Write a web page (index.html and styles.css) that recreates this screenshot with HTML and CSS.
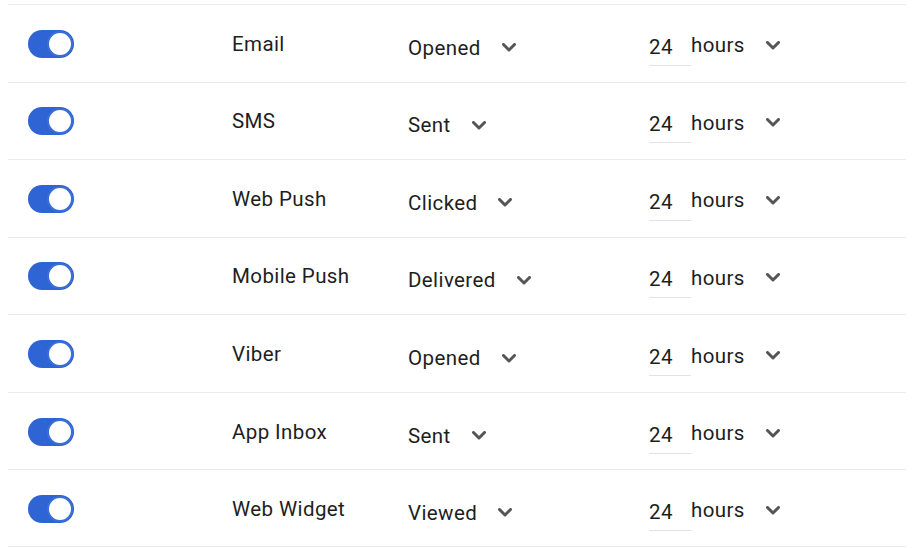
FILE: index.html
```html
<!DOCTYPE html>
<html>
<head>
<meta charset="utf-8">
<link rel="stylesheet" href="styles.css">
</head>
<body>
<div class="list">
  <div class="row">
    <div class="toggle"><span class="knob"></span></div>
    <div class="name">Email</div>
    <div class="status"><span class="status-text">Opened</span><svg class="chev" viewBox="0 0 14 9"><path d="M1.5 1.5 L7 7 L12.5 1.5"/></svg></div>
    <div class="time"><span class="num">24</span><span class="unit">hours</span><svg class="chev" viewBox="0 0 14 9"><path d="M1.5 1.5 L7 7 L12.5 1.5"/></svg></div>
  </div>
  <div class="row">
    <div class="toggle"><span class="knob"></span></div>
    <div class="name">SMS</div>
    <div class="status"><span class="status-text">Sent</span><svg class="chev" viewBox="0 0 14 9"><path d="M1.5 1.5 L7 7 L12.5 1.5"/></svg></div>
    <div class="time"><span class="num">24</span><span class="unit">hours</span><svg class="chev" viewBox="0 0 14 9"><path d="M1.5 1.5 L7 7 L12.5 1.5"/></svg></div>
  </div>
  <div class="row">
    <div class="toggle"><span class="knob"></span></div>
    <div class="name">Web Push</div>
    <div class="status"><span class="status-text">Clicked</span><svg class="chev" viewBox="0 0 14 9"><path d="M1.5 1.5 L7 7 L12.5 1.5"/></svg></div>
    <div class="time"><span class="num">24</span><span class="unit">hours</span><svg class="chev" viewBox="0 0 14 9"><path d="M1.5 1.5 L7 7 L12.5 1.5"/></svg></div>
  </div>
  <div class="row">
    <div class="toggle"><span class="knob"></span></div>
    <div class="name">Mobile Push</div>
    <div class="status"><span class="status-text">Delivered</span><svg class="chev" viewBox="0 0 14 9"><path d="M1.5 1.5 L7 7 L12.5 1.5"/></svg></div>
    <div class="time"><span class="num">24</span><span class="unit">hours</span><svg class="chev" viewBox="0 0 14 9"><path d="M1.5 1.5 L7 7 L12.5 1.5"/></svg></div>
  </div>
  <div class="row">
    <div class="toggle"><span class="knob"></span></div>
    <div class="name">Viber</div>
    <div class="status"><span class="status-text">Opened</span><svg class="chev" viewBox="0 0 14 9"><path d="M1.5 1.5 L7 7 L12.5 1.5"/></svg></div>
    <div class="time"><span class="num">24</span><span class="unit">hours</span><svg class="chev" viewBox="0 0 14 9"><path d="M1.5 1.5 L7 7 L12.5 1.5"/></svg></div>
  </div>
  <div class="row">
    <div class="toggle"><span class="knob"></span></div>
    <div class="name">App Inbox</div>
    <div class="status"><span class="status-text">Sent</span><svg class="chev" viewBox="0 0 14 9"><path d="M1.5 1.5 L7 7 L12.5 1.5"/></svg></div>
    <div class="time"><span class="num">24</span><span class="unit">hours</span><svg class="chev" viewBox="0 0 14 9"><path d="M1.5 1.5 L7 7 L12.5 1.5"/></svg></div>
  </div>
  <div class="row">
    <div class="toggle"><span class="knob"></span></div>
    <div class="name">Web Widget</div>
    <div class="status"><span class="status-text">Viewed</span><svg class="chev" viewBox="0 0 14 9"><path d="M1.5 1.5 L7 7 L12.5 1.5"/></svg></div>
    <div class="time"><span class="num">24</span><span class="unit">hours</span><svg class="chev" viewBox="0 0 14 9"><path d="M1.5 1.5 L7 7 L12.5 1.5"/></svg></div>
  </div>
</div>
</body>
</html>
```
FILE: styles.css
```css
html, body {
  margin: 0;
  padding: 0;
  background: #ffffff;
}
body {
  font-family: Roboto, "Liberation Sans", sans-serif;
  font-size: 20.5px;
  letter-spacing: 0.4px;
  color: #1e1e1e;
}
.list {
  margin: 4px 11px 0 8px;
  display: flex;
  flex-direction: column;
}
.row {
  box-sizing: border-box;
  height: 77.57px;
  border-top: 1.5px solid #ebebeb;
  display: flex;
  align-items: center;
  padding-left: 20px;
}
.row:last-child {
  border-bottom: 1.5px solid #ebebeb;
}
.toggle {
  position: relative;
  width: 46px;
  height: 28px;
  border-radius: 14px;
  background: #2e64d4;
  flex: none;
  margin-top: 1px;
}
.knob {
  position: absolute;
  right: 1px;
  top: 1px;
  width: 22px;
  height: 22px;
  border-radius: 50%;
  background: #fff;
  border: 2px solid #3a6fd8;
  box-shadow: 0 0 0 0.5px rgba(46,100,212,0.6);
}
.name {
  width: 176px;
  margin-left: 158px;
  flex: none;
  margin-top: 1px;
}
.status {
  width: 241px;
  flex: none;
  display: flex;
  align-items: center;
  margin-top: 9px;
}
.status .chev {
  margin-left: 21px;
}
.chev {
  width: 14px;
  height: 9px;
  flex: none;
}
.chev path {
  fill: none;
  stroke: #555;
  stroke-width: 3;
  stroke-linecap: round;
  stroke-linejoin: round;
}
.time {
  display: flex;
  align-items: center;
  margin-top: 4px;
}
.num {
  width: 42px;
  box-sizing: border-box;
  padding: 0 0 6px 0;
  margin-top: 10px;
  border-bottom: 1px solid #e3e3e3;
}
.unit {
  margin-left: 0;
}
.time .chev {
  margin-left: 21px;
}
```
